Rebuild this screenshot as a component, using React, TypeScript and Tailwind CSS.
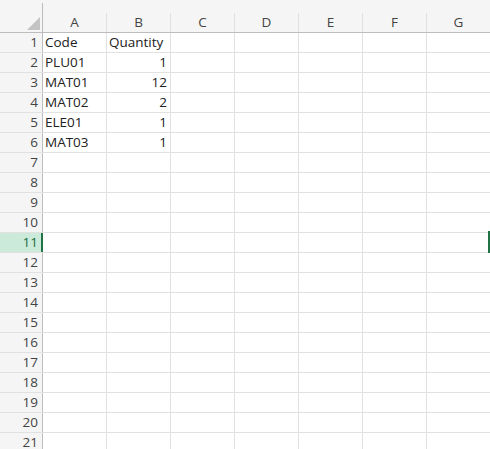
import React from 'react';

const cols = ['A', 'B', 'C', 'D', 'E', 'F', 'G'];

const data: Record<number, [string, string]> = {
  1: ['Code', 'Quantity'],
  2: ['PLU01', '1'],
  3: ['MAT01', '12'],
  4: ['MAT02', '2'],
  5: ['ELE01', '1'],
  6: ['MAT03', '1'],
};

const rows = Array.from({ length: 21 }, (_, i) => i + 1);
const activeRow = 11;

export default function App() {
  return (
    <div
      className="relative w-[490px] h-[449px] overflow-hidden bg-white text-[13.5px] text-[#222]"
      style={{ fontFamily: '"Open Sans", "Noto Sans", sans-serif' }}
    >
      {/* column headers */}
      <div className="flex h-[33px] bg-[#f5f5f5] border-b border-[#bdbdbd]">
        <div className="relative w-[43px] shrink-0 border-r border-[#bdbdbd] mt-[3px]">
          <svg className="absolute right-[2px] bottom-[2px]" width="13" height="13" viewBox="0 0 13 13">
            <polygon points="13,0 13,13 0,13" fill="#c3c3c3" />
          </svg>
        </div>
        {cols.map((c) => (
          <div
            key={c}
            className="w-[64px] shrink-0 mt-[13px] border-r border-[#e1e1e1] flex items-center justify-center text-[#444] text-[13.5px] leading-none pt-[1px]"
          >
            {c}
          </div>
        ))}
      </div>

      {/* rows */}
      {rows.map((r) => {
        const active = r === activeRow;
        const cells = data[r];
        return (
          <div key={r} className="flex h-[20px] border-b border-[#e1e1e1]">
            <div
              className={
                active
                  ? 'w-[43px] shrink-0 bg-[#cbead9] border-r-2 border-[#217346] text-[#1e6e42] flex items-center justify-end pr-[3px] pt-[1px] leading-none'
                  : 'w-[43px] shrink-0 bg-[#f5f5f5] border-r border-[#bdbdbd] text-[#444] flex items-center justify-end pr-[4px] pt-[1px] leading-none'
              }
            >
              {r}
            </div>
            {cols.map((c, i) => {
              const v = cells && i < 2 ? cells[i] : '';
              const right = i === 1 && r > 1;
              return (
                <div
                  key={c}
                  className={
                    'w-[64px] shrink-0 border-r border-[#e1e1e1] flex items-center pt-[1px] leading-none whitespace-nowrap ' +
                    (right ? 'justify-end pr-[3px]' : 'pl-[2px]')
                  }
                >
                  {v}
                </div>
              );
            })}
          </div>
        );
      })}

      {/* active cell edge, column H off screen */}
      <div className="absolute left-[488px] top-[231px] w-[2px] h-[22px] bg-[#217346]" />
    </div>
  );
}
